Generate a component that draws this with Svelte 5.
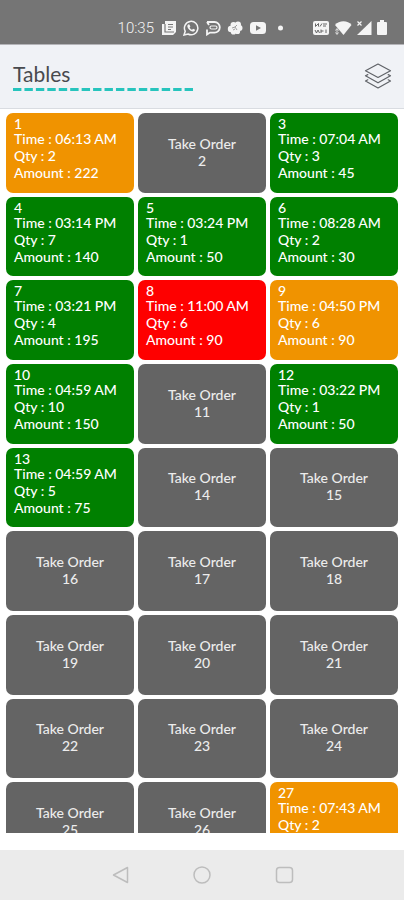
<script>
  const orders = {
    1: { time: '06:13 AM', qty: 2, amount: 222, tone: 'orange' },
    3: { time: '07:04 AM', qty: 3, amount: 45, tone: 'green' },
    4: { time: '03:14 PM', qty: 7, amount: 140, tone: 'green' },
    5: { time: '03:24 PM', qty: 1, amount: 50, tone: 'green' },
    6: { time: '08:28 AM', qty: 2, amount: 30, tone: 'green' },
    7: { time: '03:21 PM', qty: 4, amount: 195, tone: 'green' },
    8: { time: '11:00 AM', qty: 6, amount: 90, tone: 'red' },
    9: { time: '04:50 PM', qty: 6, amount: 90, tone: 'orange' },
    10: { time: '04:59 AM', qty: 10, amount: 150, tone: 'green' },
    12: { time: '03:22 PM', qty: 1, amount: 50, tone: 'green' },
    13: { time: '04:59 AM', qty: 5, amount: 75, tone: 'green' },
    27: { time: '07:43 AM', qty: 2, tone: 'orange' }
  };
  const tables = Array.from({ length: 27 }, (_, i) => ({ id: i + 1, order: orders[i + 1] }));
</script>

<div class="screen">
  <div class="status">
    <span class="clock">10:35</span>
    <div class="apps">
      <svg width="16" height="16" viewBox="0 0 16 16" aria-hidden="true">
        <path d="M4 1h11v11l-3 3H1V4h3z" fill="#f4f4f4" />
        <path d="M4 4v8h9M7 4.500h5M7 7h5M7 9.500h3" fill="none" stroke="#777" stroke-width="1.200" />
      </svg>
      <svg width="16" height="16" viewBox="0 0 16 16" aria-hidden="true">
        <path d="M1 15l1.200-3.800A6.700 6.700 0 1 1 5 14z" fill="none" stroke="#f4f4f4" stroke-width="1.500" />
        <path d="M5.200 4.500l1-.3 1.200 2.200-.8 1c.6 1.200 1.400 1.900 2.500 2.300l1-1 2 1.100c-.2 1.500-1.500 2-2.900 1.600-2.500-.8-4.300-2.600-4.800-4.700-.2-.9.100-1.700.8-2.200z" fill="#f4f4f4" />
      </svg>
      <svg width="16" height="16" viewBox="0 0 16 16" aria-hidden="true">
        <path d="M2 2h7.500a5.300 5.300 0 0 1 0 10.600H5L2 14.500V9.500M2 2l2 3" fill="none" stroke="#f4f4f4" stroke-width="1.800" />
        <rect x="5" y="6" width="7" height="3" rx="1.500" fill="none" stroke="#f4f4f4" stroke-width="1.200" />
      </svg>
      <svg width="16" height="16" viewBox="0 0 16 16" aria-hidden="true">
        <g fill="#f4f4f4">
          <circle cx="6.500" cy="5" r="3" /><circle cx="11" cy="4.500" r="3" />
          <circle cx="4" cy="9" r="3.200" /><circle cx="12.500" cy="8" r="3" />
          <circle cx="6.500" cy="12" r="2.600" /><circle cx="10.500" cy="11.500" r="2.600" />
          <circle cx="8" cy="8" r="3" />
        </g>
        <path d="M5 8l3-1 2-2M8 7l2 3M6 10l2-1" fill="none" stroke="#888" stroke-width=".8" />
      </svg>
      <svg width="18" height="16" viewBox="0 0 18 16" aria-hidden="true">
        <rect x="1" y="2" width="16" height="12" rx="3.500" fill="#f4f4f4" />
        <path d="M7 5.200L12 8l-5 2.800z" fill="#777" />
      </svg>
      <svg width="16" height="16" viewBox="0 0 16 16" aria-hidden="true">
        <circle cx="7.500" cy="8" r="2.500" fill="#f4f4f4" />
      </svg>
    </div>
    <div class="signals">
      <svg width="18" height="16" viewBox="0 0 18 16" aria-hidden="true">
        <rect x="1" y="1" width="16" height="14" rx="2" fill="#f4f4f4" />
        <path d="M3.500 3.500v3l3-3v3M8 6.500l2-3M11 4h4M11 6h3M3 10l1.500 3 1.500-3 1.500 3M9 9.500v3.500M9 11h2.500M14 9.500V13" fill="none" stroke="#666" stroke-width="1" />
      </svg>
      <svg width="18" height="16" viewBox="0 0 18 16" aria-hidden="true">
        <path d="M1 5C5 0 14 0 17.500 5L9.500 15z" fill="#f4f4f4" />
        <path d="M3 9v5M1.500 12.500L3 14.500l1.500-2M1.500 10.500L3 8.500l1.500 2" fill="none" stroke="#e0e0e0" stroke-width="1" />
      </svg>
      <svg width="16" height="16" viewBox="0 0 16 16" aria-hidden="true">
        <path d="M15.500 1v14H1z" fill="#f4f4f4" />
        <path d="M1.500 1.500l4 4M5.500 1.500l-4 4" stroke="#f4f4f4" stroke-width="1.200" />
      </svg>
      <svg width="12" height="16" viewBox="0 0 12 16" aria-hidden="true">
        <path d="M4 0h4v2h2q1 0 1 1v11q0 1-1 1H2q-1 0-1-1V3q0-1 1-1h2z" fill="#f4f4f4" />
      </svg>
    </div>
  </div>

  <header>
    <div class="title">
      <h1>Tables</h1>
      <svg width="180" height="3" viewBox="0 0 180 3" aria-hidden="true">
        <path d="M0 1.500H180" stroke="#27c4bd" stroke-width="3" stroke-dasharray="8.400 3.040" />
      </svg>
    </div>
    <button aria-label="Layers">
      <svg width="28" height="28" viewBox="0 0 28 28" aria-hidden="true">
        <g fill="none" stroke="#606368" stroke-width="1.200" stroke-linejoin="round" stroke-linecap="round">
          <path d="M14 1L26.500 7.800 14 14.500 1.500 7.800z" />
          <path d="M3.800 11.600L1.500 12.800 14 19.800 26.500 12.800 24.200 11.600" />
          <path d="M3.800 16.800L1.500 18 14 25 26.500 18 24.200 16.800" />
        </g>
      </svg>
    </button>
  </header>

  <main>
    <div class="grid">
      {#each tables as { id, order } (id)}
        {#if order}
          <button class="card order {order.tone}">
            <span class="number">{id}</span>
            <span>Time : {order.time}</span>
            <span>Qty : {order.qty}</span>
            {#if order.amount}<span>Amount : {order.amount}</span>{/if}
          </button>
        {:else}
          <button class="card free">
            <span>Take Order</span>
            <span>{id}</span>
          </button>
        {/if}
      {/each}
    </div>
  </main>

  <nav>
    <button aria-label="Back">
      <svg width="20" height="20" viewBox="0 0 20 20" aria-hidden="true">
        <path d="M17.500 2.500v15L3.500 10z" />
      </svg>
    </button>
    <button aria-label="Home">
      <svg width="20" height="20" viewBox="0 0 20 20" aria-hidden="true">
        <circle cx="10" cy="10" r="8" />
      </svg>
    </button>
    <button aria-label="Recent apps">
      <svg width="20" height="20" viewBox="0 0 20 20" aria-hidden="true">
        <rect x="2.500" y="2.500" width="16" height="15" rx="3" />
      </svg>
    </button>
  </nav>
</div>

<style>
  .screen {
    display: flex;
    flex-direction: column;
    height: 100vh;
    background: #fff;
    font-family: Lato, "Open Sans", sans-serif;
  }
  svg {
    display: block;
  }
  button {
    border: 0;
    padding: 0;
    background: none;
    font: inherit;
    color: inherit;
    cursor: pointer;
  }
  .status {
    flex: none;
    display: flex;
    align-items: center;
    justify-content: flex-end;
    box-sizing: border-box;
    height: 44px;
    padding: 12px 16px 0 0;
    background: #757575;
    color: #f4f4f4;
  }
  .clock {
    font-family: Roboto, sans-serif;
    font-size: 15px;
    line-height: 16px;
    font-weight: 300;
    margin-right: 7px;
  }
  .apps {
    display: flex;
    gap: 6px;
    margin-right: 23px;
  }
  .signals {
    display: flex;
    gap: 4px;
  }
  header {
    flex: none;
    display: flex;
    justify-content: space-between;
    align-items: center;
    box-sizing: border-box;
    height: 65px;
    padding: 0 12px 0 13px;
    background: #f0f2f6;
    border-top: 1px solid #b4b4b8;
    border-bottom: 1px solid #d9dce1;
  }
  h1 {
    margin: 0 0 2px;
    font-size: 21px;
    line-height: 24px;
    font-weight: 400;
    color: #484a4e;
  }
  main {
    flex: 1;
    min-height: 0;
    margin-bottom: 17px;
    overflow: hidden;
  }
  .grid {
    display: grid;
    grid-template-columns: repeat(3, 1fr);
    grid-auto-rows: 1fr;
    gap: 4px;
    min-height: 749px;
    padding: 4px 6px;
  }
  .card {
    display: flex;
    flex-direction: column;
    border-radius: 7px;
    color: #fff;
    font-size: 14px;
    line-height: 17px;
    font-weight: 500;
  }
  .order {
    justify-content: flex-start;
    align-items: flex-start;
    padding: 4px 8px;
  }
  .number {
    line-height: 13px;
  }
  .free {
    justify-content: center;
    align-items: center;
    padding-bottom: 2px;
    background: #646464;
    color: #ececec;
  }
  .orange {
    background: #f09300;
  }
  .green {
    background: #008000;
  }
  .red {
    background: #fe0000;
  }
  nav {
    flex: none;
    display: flex;
    justify-content: center;
    align-items: center;
    gap: 62px;
    height: 50px;
    background: #ebebeb;
  }
  nav svg {
    fill: none;
    stroke: #bdbdbd;
    stroke-width: 1.500;
    stroke-linejoin: round;
  }
</style>
